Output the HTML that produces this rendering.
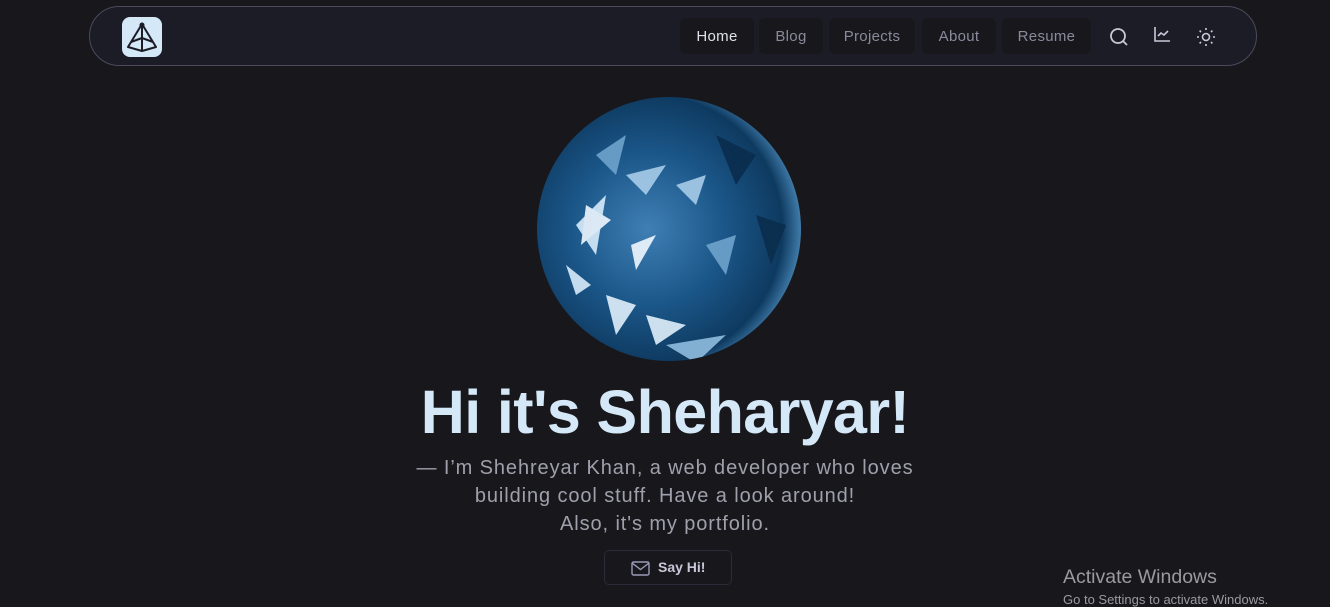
<!DOCTYPE html>
<html><head><meta charset="utf-8"><style>
*{margin:0;padding:0;box-sizing:border-box}
body{width:1330px;height:601px;background:#17171c;font-family:"Liberation Sans",sans-serif;overflow:hidden;position:relative}
.nav{position:absolute;left:89px;top:6px;width:1168px;height:60px;border:1px solid #4a4a5c;border-radius:30px;background:#1c1c26}
.logo{position:absolute;left:32px;top:10px;width:40px;height:40px;background:#d5e8f7;border-radius:8px}
.links div{position:absolute;top:11px;height:36px;line-height:37px;text-align:center;background:#17171c;border-radius:6px;color:#8a8a9c;font-size:15px;letter-spacing:0.3px}
.links div.a{color:#e0e0ea}
.ic{position:absolute;top:19px}
.sphere{position:absolute;left:536px;top:95px}
h1{position:absolute;left:0;width:1330px;top:377px;text-align:center;font-size:61px;font-weight:bold;color:#d5e8f7;letter-spacing:-0.6px}
p{position:absolute;left:0;width:1330px;top:454px;text-align:center;font-size:20px;line-height:28px;color:#a0a0ac;letter-spacing:0.9px}
.btn{position:absolute;left:604px;top:550px;width:128px;height:35px;border:1px solid #2a2a38;border-radius:5px;color:#c8c8d8;font-size:14px;font-weight:bold;line-height:33px;padding-left:53px}
.win{position:absolute;left:1063px;top:566px;color:#9a9aa0;font-size:19.5px}
.win2{position:absolute;left:1063px;top:592px;color:#9a9aa0;font-size:13px}
</style></head><body>
<div class="nav">
<div class="logo"><svg width="40" height="40" viewBox="0 0 40 40" fill="none" stroke="#1c1c26" stroke-width="2" stroke-linejoin="round"><path d="M20 7L6 30L20 34L34 30Z M20 7V34 M9 25L20 21L31 25"/><circle cx="20" cy="8" r="1.5"/></svg></div>
<div class="links"><div class="a" style="left:590px;width:74px">Home</div><div style="left:669px;width:64px">Blog</div><div style="left:739px;width:86px">Projects</div><div style="left:832px;width:74px">About</div><div style="left:912px;width:89px">Resume</div></div>
<svg class="ic" style="left:1018px" width="22" height="22" viewBox="0 0 22 22" fill="none" stroke="#c8c8d8" stroke-width="1.8"><circle cx="10" cy="10" r="7"/><path d="M15 15L19 19"/></svg>
<svg class="ic" style="left:1062px;top:17px" width="20" height="20" viewBox="0 0 20 20" fill="none" stroke="#c8c8d8" stroke-width="1.6"><path d="M3 3V17H18 M6 12L9 9L12 11L16 7"/></svg>
<svg class="ic" style="left:1105px" width="22" height="22" viewBox="0 0 22 22" fill="none" stroke="#c8c8d8" stroke-width="1.6"><circle cx="11" cy="11" r="3.5"/><path d="M11 2V4M11 18V20M2 11H4M18 11H20M4.6 4.6L6 6M16 16L17.4 17.4M4.6 17.4L6 16M16 6L17.4 4.6"/></svg>
</div>
<svg class="sphere" width="266" height="268" viewBox="0 0 266 268">
<defs><radialGradient id="g" cx="0.42" cy="0.5" r="0.6"><stop offset="0" stop-color="#3f7fb4"/><stop offset="0.5" stop-color="#1a5587"/><stop offset="0.85" stop-color="#0e3a60"/><stop offset="1" stop-color="#4f8fbf"/></radialGradient>
<clipPath id="c"><circle cx="133" cy="134" r="132"/></clipPath></defs>
<circle cx="133" cy="134" r="132" fill="url(#g)"/>
<g clip-path="url(#c)" opacity="0.9">
<path d="M40 130L70 100L60 160Z M30 170L55 190L40 200Z" fill="#d8ecfa"/>
<path d="M90 80L130 70L110 100Z M140 90L170 80L160 110Z" fill="#a8cce8"/>
<path d="M70 200L100 210L80 240Z M110 220L150 230L120 250Z" fill="#e0f0fb"/>
<path d="M60 60L90 40L80 80Z M170 150L200 140L190 180Z" fill="#6fa3cc"/>
<path d="M130 250L190 240L160 268Z" fill="#8fbddf"/>
<path d="M50 110L75 125L45 150Z M95 150L120 140L100 175Z" fill="#f0f8ff"/>
<path d="M180 40L220 60L200 90Z M220 120L250 130L235 170Z" fill="#0b2d4d"/>
</g></svg>
<h1>Hi it's Sheharyar!</h1>
<p>— I’m Shehreyar Khan, a web developer who loves<br>building cool stuff. Have a look around!<br>Also, it's my portfolio.</p>
<div class="btn"><svg style="position:absolute;left:26px;top:10px" width="19" height="15" viewBox="0 0 19 15" fill="none" stroke="#9a9ab8" stroke-width="1.4"><rect x="1" y="1" width="17" height="13" rx="1.5"/><path d="M1 2L9.5 8.5L18 2"/></svg>Say Hi!</div>
<div class="win">Activate Windows</div>
<div class="win2">Go to Settings to activate Windows.</div>
</body></html>
